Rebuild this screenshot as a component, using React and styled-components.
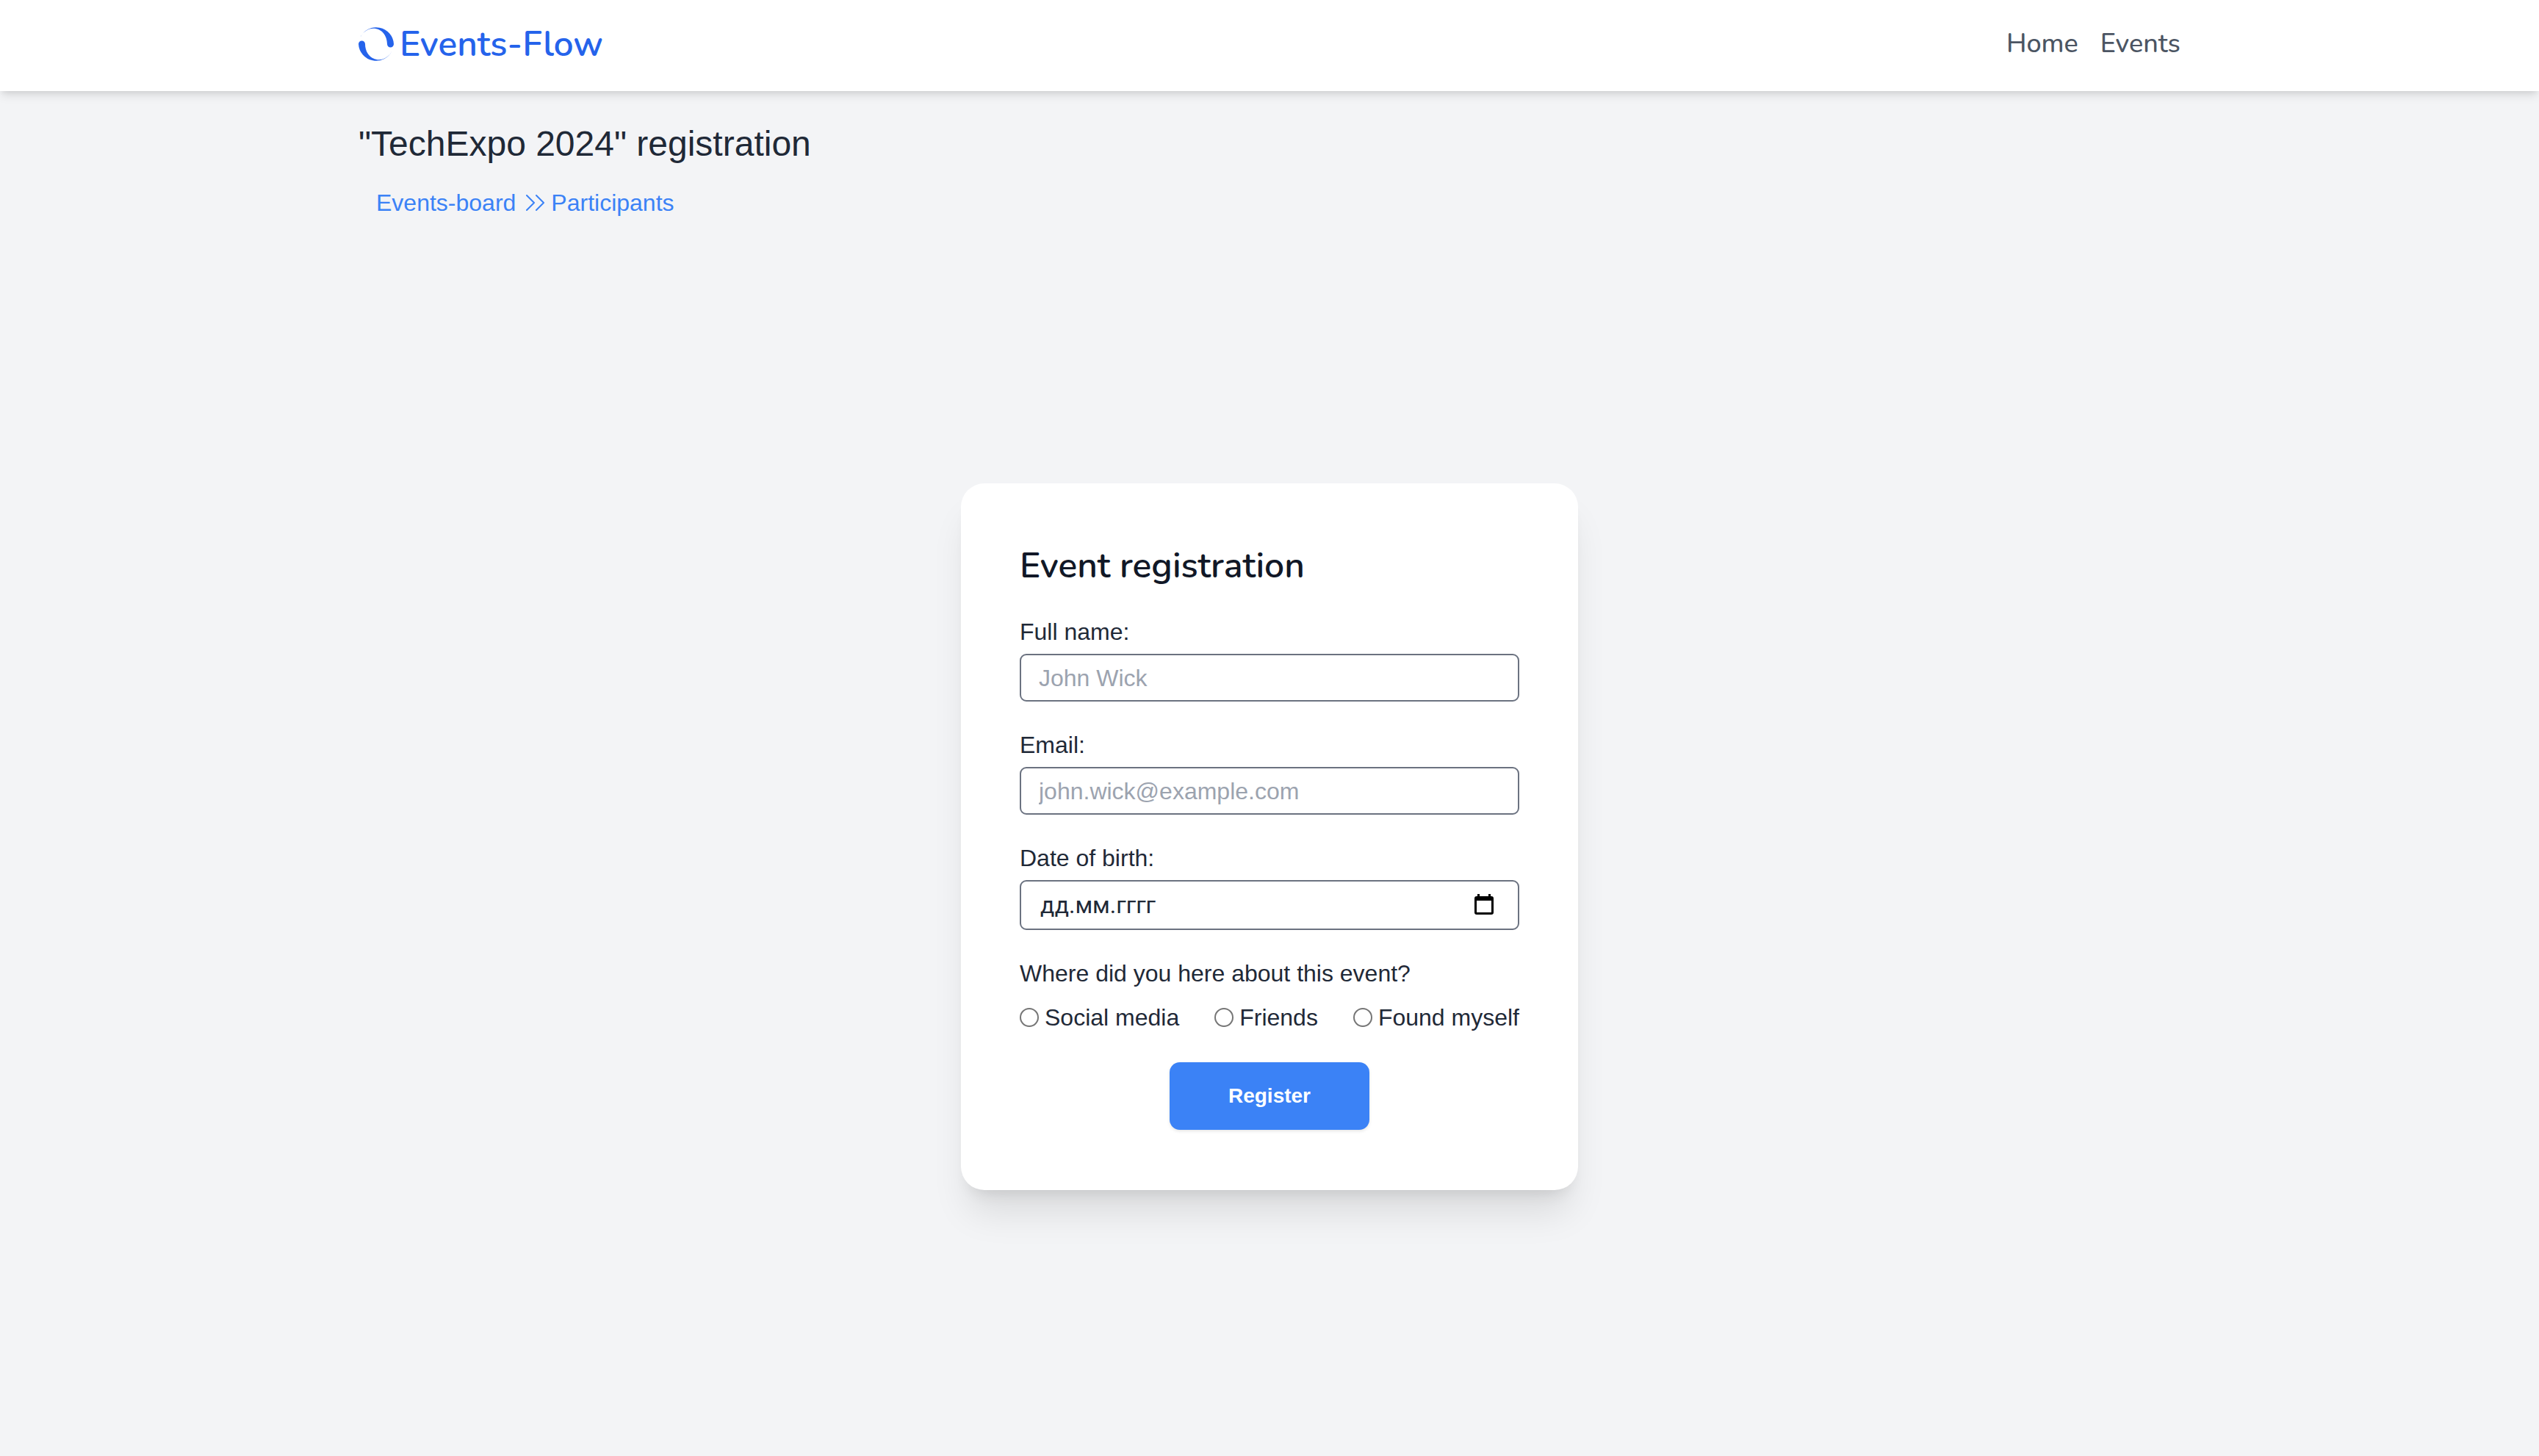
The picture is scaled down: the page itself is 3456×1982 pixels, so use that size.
import React from 'react';
import styled, { createGlobalStyle } from 'styled-components';

const GlobalStyle = createGlobalStyle`
  *, *::before, *::after { box-sizing: border-box; }
  body {
    margin: 0;
    background: #f3f4f6;
    color: #1f2937;
    font-family: "Liberation Sans", Helvetica, Arial, sans-serif;
    font-size: 32px;
    line-height: 48px;
  }
`;

const rounded = '"Nunito", "Lato", sans-serif';

const Page = styled.div`
  display: flex;
  flex-direction: column;
  min-height: 100vh;
`;

const Header = styled.header`
  background: #ffffff;
  box-shadow: 0 8px 12px -2px rgba(0, 0, 0, 0.1), 0 4px 8px -4px rgba(0, 0, 0, 0.1);
`;

const Container = styled.div`
  width: 100%;
  max-width: 2560px;
  margin: 0 auto;
  padding: 0 40px;
`;

const HeaderBar = styled(Container)`
  display: flex;
  align-items: center;
  justify-content: space-between;
  height: 124px;
  padding-bottom: 4px;
`;

const Logo = styled.a`
  display: flex;
  align-items: center;
  gap: 8px;
  color: #2563eb;
  font: 600 48px/64px ${rounded};
  text-decoration: none;
`;

const LogoMark = styled.svg`
  width: 48px;
  height: 48px;
  fill: currentColor;
`;

const Nav = styled.nav`
  display: flex;
  gap: 30px;
`;

const NavLink = styled.a`
  color: #4b5563;
  font: 500 36px/56px ${rounded};
  text-decoration: none;
`;

const Intro = styled(Container)`
  padding-top: 40px;
`;

const PageTitle = styled.h1`
  margin: 0;
  font-size: 48px;
  font-weight: 400;
  line-height: 64px;
`;

const Breadcrumbs = styled.nav`
  display: flex;
  align-items: center;
  gap: 9px;
  padding: 24px 24px 0;
  color: #3b82f6;
`;

const Crumb = styled.a`
  color: inherit;
  text-decoration: none;
`;

const Chevrons = styled.svg`
  width: 30px;
  height: 24px;
  fill: none;
  stroke: currentColor;
  stroke-width: 2;
  stroke-linecap: round;
  stroke-linejoin: round;
`;

const Main = styled.main`
  display: flex;
  flex: 1;
  align-items: center;
  justify-content: center;
  padding-bottom: 4px;
`;

const Card = styled.form`
  width: 840px;
  max-width: 100%;
  padding: 80px 80px 82px;
  border-radius: 32px;
  background: #ffffff;
  box-shadow: 0 40px 50px -10px rgba(0, 0, 0, 0.1), 0 16px 20px -12px rgba(0, 0, 0, 0.1);
`;

const CardTitle = styled.h2`
  margin: 0 0 34px;
  color: #111827;
  font: 600 48px/64px ${rounded};
`;

const Field = styled.div`
  display: flex;
  flex-direction: column;
  gap: 6px;
  margin-bottom: 35px;
`;

const InputFrame = styled.div`
  display: flex;
  align-items: center;
  height: ${(p) => (p.$tall ? 68 : 65)}px;
  padding: 0 24px;
  border: 2px solid #6b7280;
  border-radius: 9px;
`;

const Input = styled.input`
  flex: 1;
  min-width: 0;
  padding: ${(p) => (p.$date ? '0 2px' : '0')};
  border: 0;
  outline: 0;
  background: transparent;
  color: #1f2937;
  font-family: ${(p) => (p.$date ? 'Roboto, sans-serif' : 'inherit')};
  font-size: 32px;
  line-height: 38px;

  &::placeholder {
    color: ${(p) => (p.$date ? '#1f2937' : '#9ca3af')};
    opacity: 1;
  }
`;

const PickerButton = styled.button`
  display: flex;
  padding: 0;
  border: 0;
  background: none;
  color: #000000;
`;

const CalendarIcon = styled.svg`
  width: 36px;
  height: 32px;
  fill: currentColor;
`;

const SourceGroup = styled.fieldset`
  margin: 0 0 37px;
  padding: 0;
  border: 0;
`;

const Legend = styled.legend`
  padding: 0 0 12px;
`;

const Options = styled.div`
  display: flex;
  justify-content: space-between;
`;

const Option = styled.label`
  display: flex;
  align-items: center;
  gap: 8px;
  white-space: nowrap;
`;

const Radio = styled.input`
  appearance: none;
  width: 26px;
  height: 26px;
  margin: 0;
  border: 2px solid #767676;
  border-radius: 50%;
  background: #ffffff;

  &:checked {
    border: 8px solid #2563eb;
  }
`;

const SubmitButton = styled.button`
  display: block;
  height: 92px;
  margin: 0 auto;
  padding: 0 80px;
  border: 0;
  border-radius: 14px;
  background: #3b82f6;
  box-shadow: 0 2px 4px rgba(0, 0, 0, 0.1);
  color: #ffffff;
  font: inherit;
  font-size: 28px;
  font-weight: 700;
`;

const sources = [
  { value: 'social', label: 'Social media' },
  { value: 'friends', label: 'Friends' },
  { value: 'self', label: 'Found myself' },
];

const swoosh =
  'M2.3 15A24 24 0 0 1 48 24A4.5 4.5 0 0 1 39 24C39 13 32 2.8 20 2.8C12 2.8 5.5 8.5 2.3 15Z';

export default function App() {
  return (
    <Page>
      <GlobalStyle />
      <Header>
        <HeaderBar>
          <Logo href="#">
            <LogoMark viewBox="0 0 48 48" aria-hidden="true">
              <path d={swoosh} />
              <path d={swoosh} transform="rotate(180 24 24)" />
            </LogoMark>
            Events-Flow
          </Logo>
          <Nav>
            <NavLink href="#">Home</NavLink>
            <NavLink href="#events">Events</NavLink>
          </Nav>
        </HeaderBar>
      </Header>
      <Intro>
        <PageTitle>"TechExpo 2024" registration</PageTitle>
        <Breadcrumbs>
          <Crumb href="#board">Events-board</Crumb>
          <Chevrons viewBox="0 0 30 24" aria-hidden="true">
            <path d="M6 2L16 12L6 22M19 2L29 12L19 22" />
          </Chevrons>
          <Crumb href="#participants">Participants</Crumb>
        </Breadcrumbs>
      </Intro>
      <Main>
        <Card>
          <CardTitle>Event registration</CardTitle>
          <Field>
            <label htmlFor="name">Full name:</label>
            <InputFrame>
              <Input id="name" type="text" placeholder="John Wick" />
            </InputFrame>
          </Field>
          <Field>
            <label htmlFor="email">Email:</label>
            <InputFrame>
              <Input id="email" type="email" placeholder="john.wick@example.com" />
            </InputFrame>
          </Field>
          <Field>
            <label htmlFor="birth">Date of birth:</label>
            <InputFrame $tall>
              <Input id="birth" type="text" $date placeholder="дд.мм.гггг" />
              <PickerButton type="button" aria-label="Open calendar">
                <CalendarIcon viewBox="0 0 36 32" aria-hidden="true">
                  <path
                    fillRule="evenodd"
                    d="M5 1h3v3h12V1h3v3h1a3 3 0 0 1 3 3v19a3 3 0 0 1-3 3H4a3 3 0 0 1-3-3V7a3 3 0 0 1 3-3h1zM4 10v16h20V10z"
                  />
                </CalendarIcon>
              </PickerButton>
            </InputFrame>
          </Field>
          <SourceGroup>
            <Legend>Where did you here about this event?</Legend>
            <Options>
              {sources.map((source) => (
                <Option key={source.value}>
                  <Radio type="radio" name="source" value={source.value} />
                  {source.label}
                </Option>
              ))}
            </Options>
          </SourceGroup>
          <SubmitButton type="submit">Register</SubmitButton>
        </Card>
      </Main>
    </Page>
  );
}
